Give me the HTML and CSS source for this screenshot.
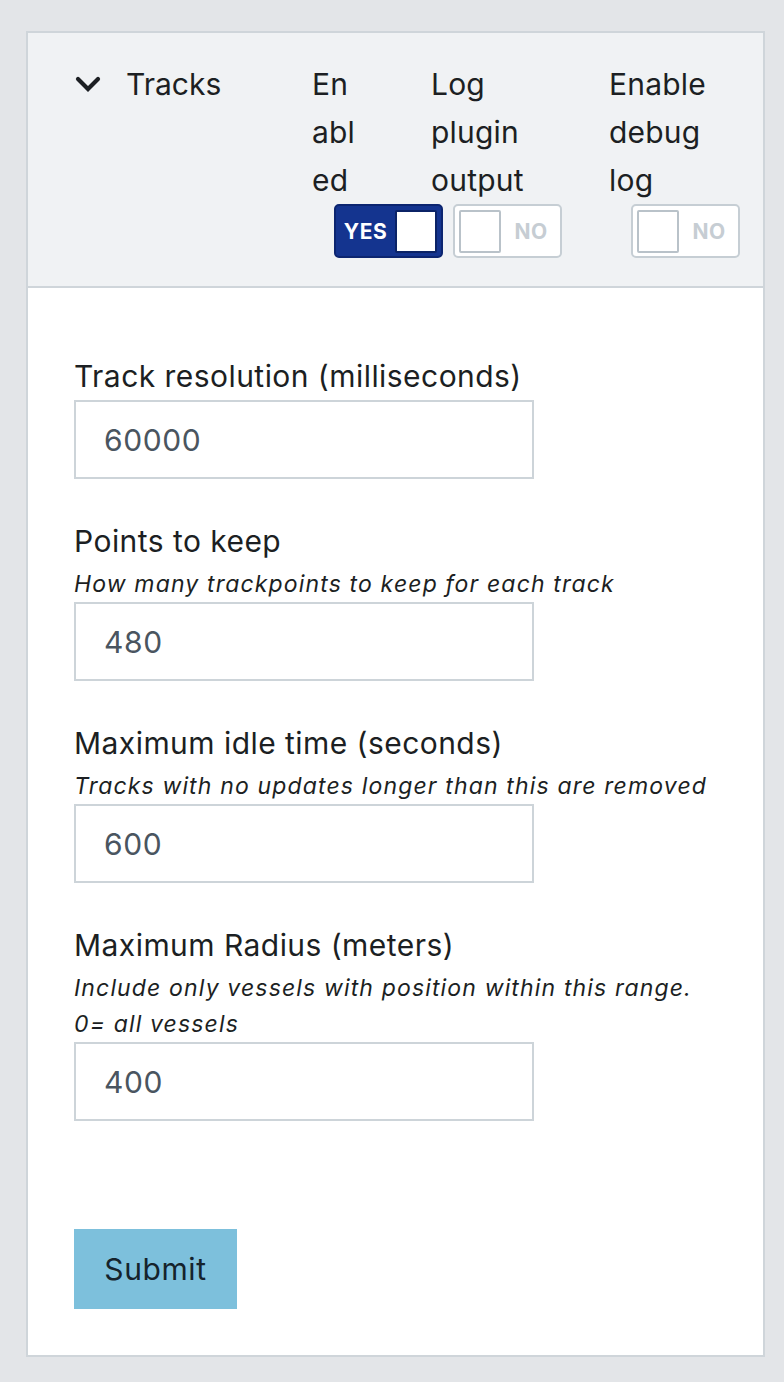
FILE: index.html
```html
<!DOCTYPE html>
<html lang="en">
<head>
<meta charset="utf-8">
<title>Tracks</title>
<link rel="stylesheet" href="styles.css">
</head>
<body>
<div class="page">
  <div class="card">
    <div class="card-header">
      <div class="title">
        <svg class="chevron" width="26" height="16" viewBox="0 0 26 16" aria-hidden="true">
          <path d="M3 3 L13 13 L23 3" fill="none" stroke="#1c1f23" stroke-width="4.2" stroke-linecap="round" stroke-linejoin="miter"/>
        </svg>
        <span class="title-text">Tracks</span>
      </div>
      <div class="col col-1">
        <div class="col-label narrow">Enabled</div>
        <div class="switch on"><span class="switch-text">YES</span><span class="knob"></span></div>
      </div>
      <div class="col col-2">
        <div class="col-label">Log plugin output</div>
        <div class="switch off"><span class="knob"></span><span class="switch-text">NO</span></div>
      </div>
      <div class="col col-3">
        <div class="col-label">Enable debug log</div>
        <div class="switch off"><span class="knob"></span><span class="switch-text">NO</span></div>
      </div>
    </div>
    <form class="card-body">
      <div class="group">
        <label class="label">Track resolution (milliseconds)</label>
        <input class="input" type="text" value="60000">
      </div>
      <div class="group">
        <label class="label">Points to keep</label>
        <p class="help">How many trackpoints to keep for each track</p>
        <input class="input" type="text" value="480">
      </div>
      <div class="group">
        <label class="label">Maximum idle time (seconds)</label>
        <p class="help">Tracks with no updates longer than this are removed</p>
        <input class="input" type="text" value="600">
      </div>
      <div class="group">
        <label class="label">Maximum Radius (meters)</label>
        <p class="help">Include only vessels with position within this range. 0= all vessels</p>
        <input class="input" type="text" value="400">
      </div>
      <button class="submit" type="button">Submit</button>
    </form>
  </div>
</div>
</body>
</html>
```
FILE: styles.css
```css
* { box-sizing: border-box; }
html, body {
  margin: 0;
  padding: 0;
  background: #e3e5e8;
}
body {
  font-family: Inter, "Noto Sans", "Liberation Sans", sans-serif;
  color: #1c1f23;
}
.page {
  padding: 31px 19px 25px 26px;
}
.card {
  background: #ffffff;
  border: 2px solid #cfd5da;
}
.card-header {
  background: #f0f2f4;
  border-bottom: 2px solid #cfd5da;
  display: flex;
  align-items: flex-start;
  padding: 27px 0 28px 47px;
}
.title {
  width: 237px;
  height: 48px;
  display: flex;
  align-items: center;
  gap: 25px;
  flex-shrink: 0;
}
.chevron { display: block; margin-top: -1px; }
.title-text {
  font-size: 30px;
  line-height: 48px;
}
.col {
  display: flex;
  flex-direction: column;
  flex-shrink: 0;
}
.col-1 { width: 119px; }
.col-2 { width: 178px; }
.col-3 { width: 140px; }
.col-label {
  font-size: 30px;
  line-height: 48px;
  width: 110px;
  letter-spacing: 0.2px;
}
.col-label.narrow {
  width: 48px;
  word-break: break-all;
}
.switch {
  margin-left: 22px;
  width: 109px;
  height: 54px;
  border: 2px solid;
  border-radius: 5px;
  padding: 4px;
  display: flex;
  align-items: center;
}
.switch.on {
  background: #14348f;
  border-color: #0c2570;
}
.switch.off {
  background: #ffffff;
  border-color: #c6ced4;
}
.knob {
  width: 42px;
  height: 43px;
  background: #ffffff;
  border: 2px solid;
  border-radius: 2px;
  flex-shrink: 0;
}
.switch.on .knob { border-color: #0b2366; }
.switch.off .knob { border-color: #b9c2c9; }
.switch-text {
  flex: 1;
  text-align: center;
  font-size: 21px;
  font-weight: 700;
  letter-spacing: 0.5px;
}
.switch.on .switch-text { color: #ffffff; padding-right: 4px; }
.switch.off .switch-text { color: #c6cdd3; padding-left: 5px; }

.card-body {
  margin: 0;
  padding: 64px 46px 46px 46px;
}
.group {
  margin-bottom: 38px;
}
.label {
  display: block;
  font-size: 30px;
  line-height: 48px;
  letter-spacing: 0.45px;
}
.help {
  margin: 1px 0 0;
  font-size: 23px;
  line-height: 36px;
  font-style: italic;
  letter-spacing: 1.15px;
}
.input {
  display: block;
  width: 460px;
  height: 79px;
  border: 2px solid #cdd4d9;
  border-radius: 0;
  padding: 0 28px;
  font-family: inherit;
  font-size: 30px;
  letter-spacing: 0.6px;
  color: #4a5560;
  background: #ffffff;
  outline: none;
}
.submit {
  display: block;
  margin-top: 108px;
  width: 163px;
  height: 80px;
  border: 0;
  background: #7dc0dc;
  color: #15232c;
  font-family: inherit;
  font-size: 30px;
  letter-spacing: 0.6px;
  padding: 0;
}
```
